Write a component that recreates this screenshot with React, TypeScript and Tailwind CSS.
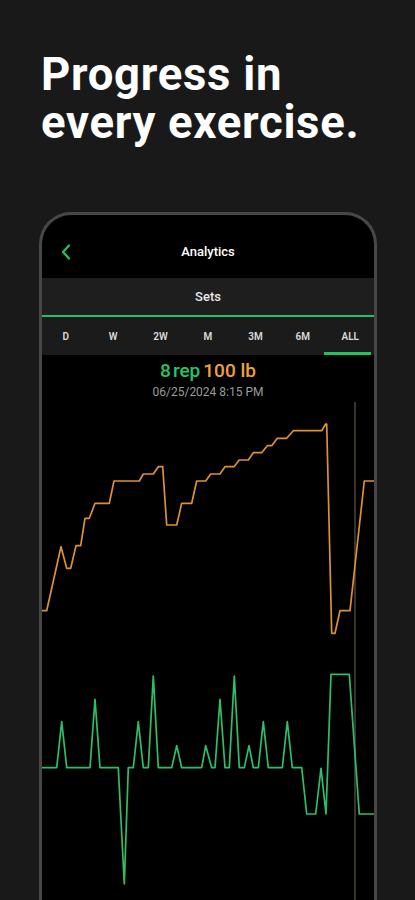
import React from 'react';

const ranges = ['D', 'W', '2W', 'M', '3M', '6M', 'ALL'];

// chart points in page coordinates (viewBox matches the page)
const weightLine = [
    [42, 610.7], [46.7, 610.7], [61, 546.7], [66.7, 568.3], [70.7, 568.3], [76, 545.7], [80.7, 545.7],
    [85, 518.3], [89.3, 518.3], [95, 503.3], [109.3, 503.3], [114, 481], [139.3, 481], [143.3, 474],
    [153.3, 474], [158.3, 466.7], [162.7, 466.7], [166.7, 525], [176.7, 525], [181.7, 503.3],
    [191.7, 503.3], [196.7, 481], [205.7, 481], [210.7, 474], [220, 474], [225, 466.7], [234, 466.7],
    [239.3, 460], [248.3, 460], [253.3, 452.7], [261.7, 452.7], [267.3, 445.7], [271.7, 445.7],
    [277.3, 438.3], [286.7, 438.3], [293.3, 430.7], [321.7, 430.7], [325.7, 424], [326.7, 424],
    [331.7, 633.3], [335, 633.3], [340, 610.7], [350, 610.7], [364.3, 481], [374, 481],
];

const repLine = [
    [42, 767.7], [56.7, 767.7], [61.7, 721.7], [66.7, 767.7], [90, 767.7], [95, 699.3], [100, 767.7],
    [118.3, 767.7], [124.3, 884], [128.3, 767.7], [133.3, 767.7], [138.3, 721.7], [143.3, 767.7],
    [148.3, 767.7], [153.3, 676], [158.3, 767.7], [171.7, 767.7], [176.7, 745.7], [181.7, 767.7],
    [201.7, 767.7], [205.7, 745.7], [211.7, 767.7], [215, 767.7], [220, 699.3], [225, 767.7],
    [229.3, 767.7], [234.3, 676], [239.3, 767.7], [244.3, 767.7], [249, 745.7], [253.3, 767.7],
    [258.3, 767.7], [263.3, 721.7], [268.3, 767.7], [282.3, 767.7], [287.3, 721.7], [292.3, 767.7],
    [301.7, 767.7], [306.7, 814], [315.7, 814], [321, 768.3], [326, 814], [331, 674.3], [349.3, 674.3],
    [359.3, 814], [374, 814],
];

const toPoints = (pts: number[][]) => pts.map(([x, y]) => `${x},${y}`).join(' ');

const Chart: React.FC = () => (
    <svg width="332" height="500" viewBox="42 400 332 500" className="block">
        <line x1="355" y1="402" x2="355" y2="900" stroke="#5e574b" strokeWidth="1.2" />
        <polyline points={toPoints(weightLine)} fill="none" stroke="#dc9132" strokeWidth="1.7" strokeLinejoin="round" />
        <polyline points={toPoints(repLine)} fill="none" stroke="#2cbf6a" strokeWidth="1.7" strokeLinejoin="round" />
    </svg>
);

export default function App() {
    return (
        <div className="h-[900px] w-[415px] overflow-hidden bg-[#191919]" style={{ fontFamily: 'Roboto, "Liberation Sans", sans-serif' }}>
            <h1 className="pt-[51px] pl-[41px] text-[45.5px] leading-[48px] font-bold text-white tracking-[0.7px]">
                Progress in
                <br />
                every exercise.
            </h1>

            <div className="mt-[65px] ml-[39px] w-[338px] h-[700px] rounded-t-[32px] border-[3px] border-b-0 border-[#474747] bg-black overflow-hidden">
                <div className="h-[63px] relative flex justify-center pt-[29px]">
                    <svg className="absolute left-[19px] top-[29px]" width="10" height="16" viewBox="0 0 10 16">
                        <path d="M8 1.5 L2 8 L8 14.5" fill="none" stroke="#22c162" strokeWidth="2.2" strokeLinecap="round" strokeLinejoin="round" />
                    </svg>
                    <span className="text-[13px] leading-4 font-medium text-white">Analytics</span>
                </div>

                <div className="h-[37px] bg-[#1e1e1e] flex items-center justify-center">
                    <span className="text-[13px] font-medium text-[#e8e8e8]">Sets</span>
                </div>
                <div className="h-[2px] bg-[#22c162]" />

                <div className="h-[38px] bg-[#1b1b1b] grid grid-cols-7">
                    {ranges.map((r) => (
                        <div key={r} className="relative flex items-center justify-center">
                            <span className="text-[10px] font-semibold text-[#dcdcdc]">{r}</span>
                            {r === 'ALL' && <div className="absolute bottom-0 left-[-3px] right-[3px] h-[3px] bg-[#22c162]" />}
                        </div>
                    ))}
                </div>

                <div className="h-[45px] flex flex-col items-center pt-[4px]">
                    <div className="text-[19px] leading-[24px] font-medium">
                        <span className="text-[#27c466]">8</span>
                        <span className="text-[#27c466] ml-[2px]">rep</span>
                        <span className="text-[#eea23a] ml-[3px]">100 lb</span>
                    </div>
                    <div className="text-[12px] leading-[14px] text-[#9c9c9c] mt-[2px]">06/25/2024 8:15 PM</div>
                </div>

                <Chart />
            </div>
        </div>
    );
}
